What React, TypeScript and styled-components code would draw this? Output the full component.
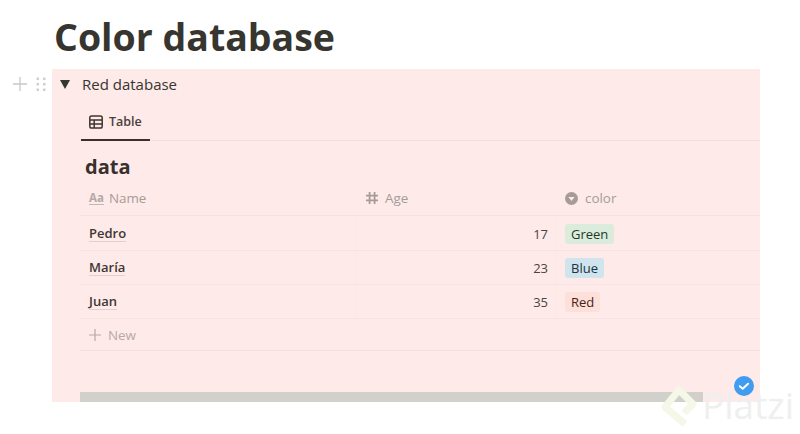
import styled, { createGlobalStyle } from "styled-components";

const rows = [
  { name: "Pedro", age: 17, color: "Green", bg: "#dcecdc", ink: "#1f3a2a" },
  { name: "María", age: 23, color: "Blue", bg: "#d0e4ee", ink: "#1c3343" },
  { name: "Juan", age: 35, color: "Red", bg: "#fde0da", ink: "#4a1e16" },
];

const App = () => {
  return (
    <Page>
      <GlobalStyle />
      <Title>Color database</Title>
      <Block>
        <Gutter>
          <svg width="14" height="14" viewBox="0 0 14 14">
            <path d="M7 0v14M0 7h14" stroke="#c8c8c6" strokeWidth="1.3" />
          </svg>
          <svg width="10" height="14" viewBox="0 0 10 14" fill="#cfcfcd">
            <rect x="0.5" y="0.5" width="2.5" height="2.5" />
            <rect x="7" y="0.5" width="2.5" height="2.5" />
            <rect x="0.5" y="6" width="2.5" height="2.5" />
            <rect x="7" y="6" width="2.5" height="2.5" />
            <rect x="0.5" y="11.5" width="2.5" height="2.5" />
            <rect x="7" y="11.5" width="2.5" height="2.5" />
          </svg>
        </Gutter>
        <Panel>
          <ToggleRow>
            <svg width="10" height="9" viewBox="0 0 10 9">
              <path d="M0 0h10L5 9z" fill="#37352f" />
            </svg>
            <ToggleLabel>Red database</ToggleLabel>
          </ToggleRow>
          <Tabs>
            <ActiveTab>
              <svg width="14" height="14" viewBox="0 0 14 14" fill="none" stroke="#3f3532" strokeWidth="1.5">
                <rect x="0.8" y="1" width="12.4" height="12" rx="1.8" />
                <path d="M0.8 5h12.4M0.8 9h12.4M5.2 5v8" />
              </svg>
              Table
            </ActiveTab>
          </Tabs>
          <DataTitle>data</DataTitle>
          <HeaderRow>
            <NameHead>
              <AaIcon>Aa</AaIcon>
              Name
            </NameHead>
            <AgeHead>
              <svg width="14" height="14" viewBox="0 0 14 14" stroke="#a79b98" strokeWidth="1.8">
                <path d="M4.6 1v12M9.6 1v12M1 4.6h12M1 9.4h12" />
              </svg>
              Age
            </AgeHead>
            <ColorHead>
              <svg width="13" height="13" viewBox="0 0 13 13">
                <circle cx="6.5" cy="6.5" r="6.5" fill="#a79b98" />
                <path d="M3.4 5h6.2L6.5 9z" fill="#fdeae9" />
              </svg>
              color
            </ColorHead>
          </HeaderRow>
          <Rows>
            {rows.map((row) => (
              <Row key={row.name}>
                <NameCell>
                  <NameText>{row.name}</NameText>
                </NameCell>
                <AgeCell>{row.age}</AgeCell>
                <ColorCell>
                  <Tag $bg={row.bg} $ink={row.ink}>{row.color}</Tag>
                </ColorCell>
              </Row>
            ))}
          </Rows>
          <NewRow>
            <svg width="12" height="12" viewBox="0 0 12 12">
              <path d="M6 0v12M0 6h12" stroke="#b5a9a8" strokeWidth="1.2" />
            </svg>
            New
          </NewRow>
          <Spacer />
          <ScrollBar />
          <CheckBadge>
            <svg width="20" height="20" viewBox="0 0 20 20">
              <circle cx="10" cy="10" r="10" fill="#3f9cf0" />
              <path d="M5.8 10.2l2.9 2.5 5.4-5" fill="none" stroke="#fff" strokeWidth="2" strokeLinecap="round" strokeLinejoin="round" />
            </svg>
          </CheckBadge>
        </Panel>
      </Block>
      <Watermark>
        <svg width="42" height="46" viewBox="0 0 42 46" fill="none">
          <path d="M27 40L7 23 21 6l14 14-9 9" stroke="#f5f8e8" strokeWidth="7" strokeLinejoin="round" />
        </svg>
        <WatermarkText>Platzi</WatermarkText>
      </Watermark>
    </Page>
  );
};

const GlobalStyle = createGlobalStyle`
  html, body {
    margin: 0;
    padding: 0;
    background: #fff;
    overflow: hidden;
  }
  body {
    font-family: "Open Sans", "Noto Sans", sans-serif;
    color: #37352f;
  }
`;

const Page = styled.div`
  position: relative;
  width: 800px;
  height: 434px;
  overflow: hidden;
`;

const Title = styled.h1`
  margin: 0;
  height: 69px;
  padding: 9px 0 0 54px;
  box-sizing: border-box;
  font-size: 37.5px;
  line-height: 56px;
  font-weight: 700;
  color: #37352f;
`;

const Block = styled.div`
  display: flex;
`;

const Gutter = styled.div`
  width: 52px;
  height: 30px;
  box-sizing: border-box;
  padding: 8px 6px 0 13px;
  display: flex;
  justify-content: space-between;
  align-items: flex-start;
`;

const Panel = styled.div`
  position: relative;
  width: 708px;
  height: 333px;
  background: #fdeae9;
  display: flex;
  flex-direction: column;
  padding-left: 28px;
  box-sizing: border-box;
`;

const ToggleRow = styled.div`
  margin-left: -20px;
  height: 30px;
  display: flex;
  align-items: center;
  gap: 12px;
`;

const ToggleLabel = styled.span`
  font-size: 15px;
  color: #37352f;
`;

const Tabs = styled.div`
  margin-top: 3px;
  height: 39px;
  border-bottom: 1px solid #f3dfdd;
  box-sizing: border-box;
  display: flex;
`;

const ActiveTab = styled.div`
  width: 69px;
  height: 39px;
  margin-left: 1px;
  box-sizing: border-box;
  padding: 2px 0 0 8px;
  border-bottom: 2px solid #3b2f2c;
  display: flex;
  align-items: center;
  gap: 6px;
  font-size: 12.5px;
  font-weight: 600;
  color: #4a403c;
`;

const DataTitle = styled.div`
  height: 40px;
  padding-left: 5px;
  font-size: 20px;
  line-height: 52px;
  font-weight: 700;
  color: #37302d;
`;

const HeaderRow = styled.div`
  display: grid;
  grid-template-columns: 276px 200px 1fr;
  height: 35px;
  border-bottom: 1px solid #f6e1df;
  box-sizing: border-box;
  font-size: 13.4px;
  color: #a79b98;
`;

const HeadCell = styled.div`
  display: flex;
  align-items: center;
  gap: 6px;
`;

const NameHead = styled(HeadCell)`
  padding-left: 9px;
  gap: 5px;
`;

const AgeHead = styled(HeadCell)`
  padding-left: 9px;
`;

const ColorHead = styled(HeadCell)`
  padding-left: 9px;
  gap: 7px;
`;

const AaIcon = styled.span`
  font-size: 11.5px;
  font-weight: 700;
  line-height: 12px;
  color: #b5a9a8;
  border-bottom: 1.5px solid #c4b8b7;
`;

const Rows = styled.div`
  padding-top: 1px;
`;

const Row = styled.div`
  display: grid;
  grid-template-columns: 276px 200px 1fr;
  height: 34px;
  border-bottom: 1px solid #f7e3e1;
  box-sizing: border-box;
  font-size: 13px;
`;

const NameCell = styled.div`
  display: flex;
  align-items: center;
  padding-left: 9px;
  border-right: 1px solid #fbe8e6;
`;

const NameText = styled.span`
  font-weight: 600;
  line-height: 16px;
  color: #3f3734;
  border-bottom: 1px solid #e3cfcd;
`;

const AgeCell = styled.div`
  display: flex;
  align-items: center;
  justify-content: flex-end;
  padding-right: 7px;
  border-right: 1px solid #fbe8e6;
  color: #4a4441;
`;

const ColorCell = styled.div`
  display: flex;
  align-items: center;
  padding-left: 9px;
`;

const Tag = styled.span<{ $bg: string; $ink: string }>`
  height: 20px;
  padding: 0 6px;
  border-radius: 3px;
  font-size: 13px;
  line-height: 20px;
  background: ${(p) => p.$bg};
  color: ${(p) => p.$ink};
`;

const NewRow = styled.div`
  height: 32px;
  border-bottom: 1px solid #f3dfdd;
  box-sizing: border-box;
  display: flex;
  align-items: center;
  gap: 7px;
  padding-left: 9px;
  font-size: 13.4px;
  color: #b5a9a8;
`;

const Spacer = styled.div`
  flex: 1;
`;

const ScrollBar = styled.div`
  width: 623px;
  height: 10px;
  background: #d2d0cb;
`;

const CheckBadge = styled.div`
  position: absolute;
  left: 682px;
  bottom: 6px;
  width: 20px;
  height: 20px;
`;

const Watermark = styled.div`
  position: absolute;
  left: 658px;
  top: 384px;
  display: flex;
  align-items: center;
  gap: 2px;
`;

const WatermarkText = styled.span`
  font-size: 37px;
  line-height: 46px;
  margin-top: -4px;
  color: #efefef;
`;

export default App;
